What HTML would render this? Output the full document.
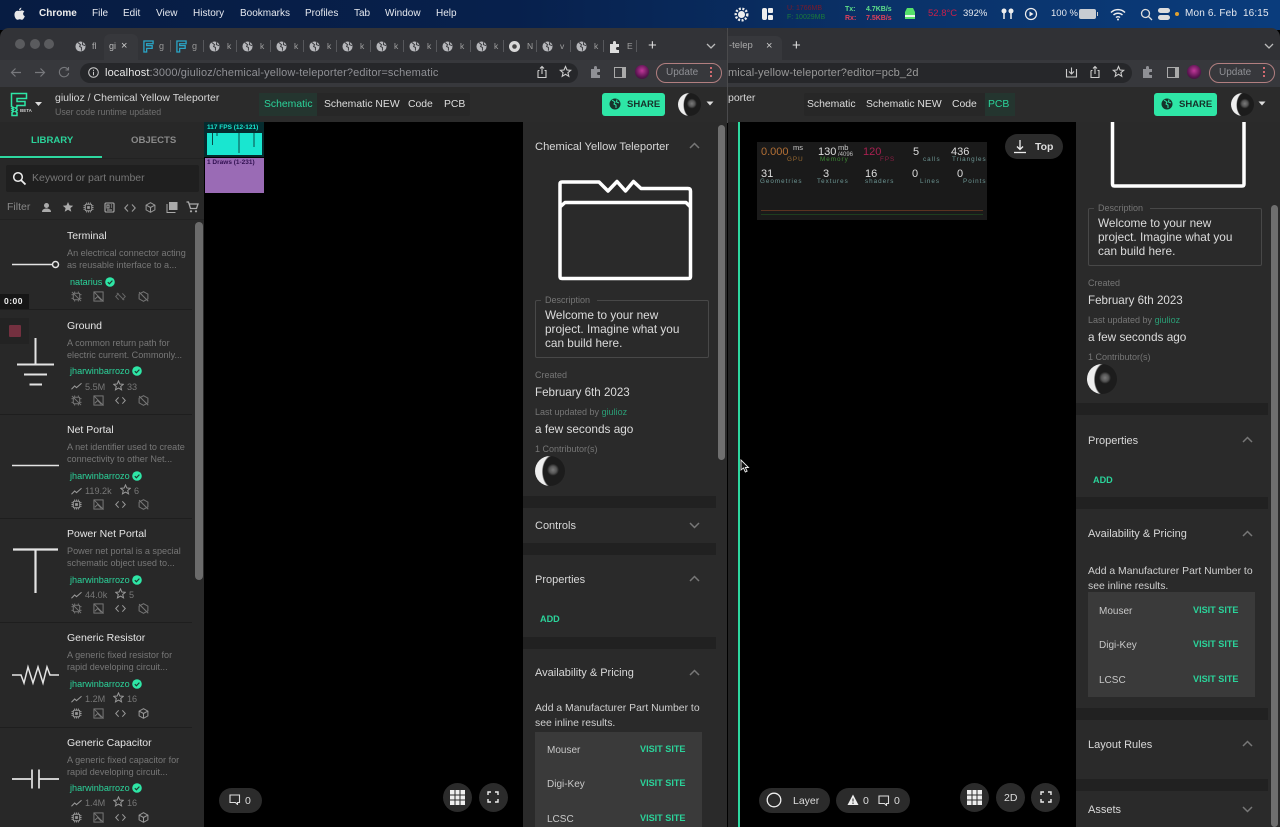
<!DOCTYPE html>
<html><head><meta charset="utf-8"><title>Chemical Yellow Teleporter</title>
<style>
html,body{margin:0;padding:0;background:#000}
#r{position:relative;width:1280px;height:827px;overflow:hidden;background:#000;font-family:"Liberation Sans",sans-serif;color:#ddd}
#r div,#r svg.a{position:absolute}
.t{position:absolute;white-space:nowrap;line-height:16px;height:16px}
.m{font-size:10px;color:#e6e9ef;top:6px}
.ti{font-size:10.5px;color:#e6e6e6;left:67px;margin-top:1px}
.de{font-size:9.1px;color:#777;left:67px}
.au{font-size:9.1px;color:#2bd39a;left:70px}
.st{font-size:9.1px;color:#777;margin-top:1px}
.hd{font-size:11px;color:#d8d8d8;margin-top:1px}
.sm{font-size:9px;color:#767676}
.bd{font-size:11.8px;color:#dcdcdc}
.vs{font-size:9.1px;font-weight:bold;color:#2bd39a;margin-top:1px}
.row{font-size:10px;color:#c8c8c8;margin-top:2px}
.band{background:#212121;height:12px}
.tb{font-size:10.4px;color:#dedede;top:97px}
.pill{background:#2b2b2b;border-radius:16px}
.share{background:#2ee6a6;border-radius:3px;width:63px;height:23px;top:93px}
.tg{font-size:8.5px;color:#a0a0a0;top:38px}
.sp{width:1px;height:12px;top:40px;background:#57585c}
.lb{font-size:6.3px;letter-spacing:1px;color:#6d9694}
.av{background:radial-gradient(circle 6px at 60% 46%,#7a7a7a 0,#555 60%,transparent 100%),radial-gradient(ellipse 13px 18px at 66% 52%,#1c1c1c 0,#1c1c1c 90%,transparent 100%),#eee}
.av2{background:radial-gradient(circle 5px at 60% 46%,#7a7a7a 0,#555 60%,transparent 100%),radial-gradient(ellipse 10px 14px at 66% 52%,#1c1c1c 0,#1c1c1c 90%,transparent 100%),#eee}
</style></head><body><div id="r">
<!-- menu bar -->
<div style="left:0;top:0;width:1280px;height:30px;background:linear-gradient(90deg,#071c42 0,#07204c 40%,#0a3269 70%,#0a3c7c 100%)"></div>
<svg class="a" style="left:14px;top:7px" width="11" height="14" viewBox="0 0 12 14"><path fill="#e8e8e8" d="M8 0c0 1.500-1 3-2.500 3C5.500 1.500 6.700.200 8 0zM6 3.600c.8 0 1.500-.6 2.700-.6 1 0 2 .5 2.600 1.400-2 1.200-1.700 4 .5 4.900-.6 1.700-1.800 4-3.100 4-.9 0-1.200-.6-2.400-.6s-1.600.6-2.400.6C2.300 13.300.5 10.500.5 7.800c0-2.800 1.700-4.400 3.400-4.400 1 0 1.600.5 2.100.2z"/></svg>
<span class="t m" style="left:39px;font-weight:bold;color:#eee">Chrome</span>
<span class="t m" style="left:92px">File</span><span class="t m" style="left:123px">Edit</span><span class="t m" style="left:156px">View</span><span class="t m" style="left:193px">History</span><span class="t m" style="left:240px">Bookmarks</span><span class="t m" style="left:305px">Profiles</span><span class="t m" style="left:354px">Tab</span><span class="t m" style="left:385px">Window</span><span class="t m" style="left:436px">Help</span>
<svg class="a" style="left:734px;top:7px" width="15" height="15" viewBox="0 0 15 15"><circle cx="7.500" cy="7.500" r="3.500" fill="#eee"/><circle cx="7.500" cy="7.500" r="5.800" fill="none" stroke="#eee" stroke-width="2.400" stroke-dasharray="2 1.500"/></svg>
<div style="left:762px;top:8px;width:5px;height:12px;background:#eee;border-radius:2px"></div><div style="left:768px;top:8px;width:5px;height:5px;background:#eee;border-radius:1px"></div><div style="left:768px;top:15px;width:5px;height:5px;background:#eee;border-radius:1px"></div>
<span class="t" style="left:787px;top:4px;font-size:7px;color:#7d1a2a;line-height:9px">U: 1766MB</span>
<span class="t" style="left:787px;top:13px;font-size:7px;color:#1a7a3a;line-height:9px">F: 10029MB</span>
<span class="t" style="left:845px;top:5px;font-size:7px;color:#5fe08a;line-height:9px;font-weight:bold">Tx:</span>
<span class="t" style="left:845px;top:14px;font-size:7px;color:#e0405a;line-height:9px;font-weight:bold">Rx:</span>
<span class="t" style="left:866px;top:5px;font-size:7px;color:#5fe08a;line-height:9px;font-weight:bold">4.7KB/s</span>
<span class="t" style="left:866px;top:14px;font-size:7px;color:#e0405a;line-height:9px;font-weight:bold">7.5KB/s</span>
<svg class="a" style="left:904px;top:7px" width="12" height="13" viewBox="0 0 12 13"><path d="M3 1h6l2 4v7H1V5z" fill="#55e06a"/><path d="M1 9h10" stroke="#e8f8ea" stroke-width="2"/></svg>
<span class="t" style="left:928px;top:6px;font-size:9.500px;color:#c8204a">52.8°C</span>
<span class="t" style="left:963px;top:6px;font-size:9.500px;color:#e6e9ef">392%</span>
<svg class="a" style="left:1000px;top:8px" width="16" height="13" viewBox="0 0 16 13"><path d="M4 1v10M11 1v10" stroke="#eee" stroke-width="1.500"/><circle cx="4" cy="3" r="2.500" fill="#eee"/><circle cx="11" cy="3" r="2.500" fill="#eee"/></svg>
<svg class="a" style="left:1024px;top:7px" width="14" height="14" viewBox="0 0 14 14"><circle cx="7" cy="7" r="5.500" fill="none" stroke="#eee" stroke-width="1.200"/><path d="M5.500 4.500v5l4-2.500z" fill="#eee"/></svg>
<span class="t" style="left:1051px;top:6px;font-size:9.500px;color:#e6e9ef">100 %</span>
<div style="left:1079px;top:9px;width:17px;height:10px;background:#c8ccd2;border-radius:2px"></div><div style="left:1097px;top:12px;width:1px;height:4px;background:#ccc"></div>
<svg class="a" style="left:1110px;top:8px" width="16" height="13" viewBox="0 0 16 13"><path d="M1 4.500a10 10 0 0 1 14 0M3.500 7a6.500 6.500 0 0 1 9 0M6 9.500a3 3 0 0 1 4 0" fill="none" stroke="#eee" stroke-width="1.500"/><circle cx="8" cy="11.500" r="1" fill="#eee"/></svg>
<svg class="a" style="left:1140px;top:8px" width="13" height="13" viewBox="0 0 13 13"><circle cx="5.500" cy="5.500" r="4" fill="none" stroke="#ddd" stroke-width="1.300"/><path d="M8.500 8.500l3.500 3.500" stroke="#ddd" stroke-width="1.300"/></svg>
<div style="left:1158px;top:8px;width:12px;height:5px;background:#ddd;border-radius:3px"></div><div style="left:1158px;top:15px;width:12px;height:5px;background:#ddd;border-radius:3px"></div>
<div style="left:1175px;top:12px;width:4px;height:4px;background:#e0a030;border-radius:2px"></div>
<span class="t" style="left:1185px;top:6px;font-size:10px;color:#e6e9ef;letter-spacing:.15px">Mon 6. Feb&nbsp; 16:15</span>

<!-- right window chrome -->
<div style="left:700px;top:28px;width:580px;height:32px;background:#303135;border-radius:0 9px 0 0"></div>
<div style="left:700px;top:60px;width:580px;height:27px;background:#37383c"></div>
<div style="left:700px;top:87px;width:580px;height:36px;background:#2b2b2b"></div>
<div style="left:728px;top:36px;width:54px;height:24px;background:#37383c;border-radius:0 6px 0 0"></div>
<span class="t" style="left:729px;top:38px;font-size:9.500px;color:#aaa">-telep</span>
<span class="t" style="left:766px;top:38px;font-size:11px;color:#ccc">×</span>
<span class="t" style="left:792px;top:38px;font-size:15px;color:#ddd">+</span>
<svg class="a" style="left:1264px;top:42px" width="10" height="8" viewBox="0 0 10 8"><path d="M1 2l4 4 4-4" fill="none" stroke="#bbb" stroke-width="1.300"/></svg>
<div style="left:728px;top:63px;width:404px;height:20px;background:#26272a;border-radius:0 10px 10px 0"></div>
<span class="t" style="left:728px;top:65px;font-size:11px;color:#999;letter-spacing:.12px">mical-yellow-teleporter?editor=pcb_2d</span>
<svg class="a" style="left:1065px;top:66px" width="13" height="13" viewBox="0 0 13 13"><path d="M1.500 3v8h10V3M6.500 1.500v6M4 5.500l2.500 2.500L9 5.500" fill="none" stroke="#ccc" stroke-width="1.100"/></svg>
<svg class="a" style="left:1089px;top:65px" width="12" height="14" viewBox="0 0 12 14"><path d="M2 5.500h1.500M8.500 5.500H10v7H2v-7M6 9V1.500M4 3.500l2-2 2 2" fill="none" stroke="#ccc" stroke-width="1.100"/></svg>
<svg class="a" style="left:1112px;top:65px" width="13" height="13" viewBox="0 0 13 13"><path d="M6.500 1.500l1.500 3.500 3.700.3-2.800 2.400.9 3.600-3.300-2-3.300 2 .9-3.600L1.300 5.300 5 5z" fill="none" stroke="#ccc" stroke-width="1.100"/></svg>
<svg class="a" style="left:1142px;top:66px" width="12" height="12" viewBox="0 0 12 12"><path d="M1 3h3V1.500a1.500 1.500 0 0 1 3 0V3h3v3h-1.500a1.500 1.500 0 0 0 0 3H10v3H1z" fill="#8f9095"/></svg>
<div style="left:1167px;top:67px;width:7px;height:9px;border:1.300px solid #aaa;border-right-width:4px"></div>
<div style="left:1187px;top:65px;width:14px;height:14px;border-radius:7px;background:radial-gradient(circle at 50% 40%,#c2389a 0,#5a1450 60%,#1b1b20 100%)"></div>
<div style="left:1209px;top:63px;width:64px;height:18px;border:1px solid #b27f80;border-radius:10px"></div>
<span class="t" style="left:1219px;top:65px;font-size:10px;color:#8f9095">Update</span>
<div style="left:1263px;top:67px;width:2px;height:2px;background:#d06a70"></div><div style="left:1263px;top:71px;width:2px;height:2px;background:#d06a70"></div><div style="left:1263px;top:75px;width:2px;height:2px;background:#d06a70"></div>
<span class="t" style="left:728px;top:90px;font-size:10.500px;color:#d8d8d8">porter</span>
<div style="left:804px;top:93px;width:211px;height:23px;background:#272727;border-radius:2px"></div>
<div style="left:985px;top:93px;width:30px;height:23px;background:#24352f"></div>
<span class="t tb" style="left:807px">Schematic</span><span class="t tb" style="left:866px">Schematic NEW</span><span class="t tb" style="left:952px">Code</span><span class="t tb" style="left:988px;color:#2bd39a">PCB</span>
<div class="share" style="left:1154px"></div>
<svg class="a" style="left:1161px;top:98px" width="12" height="12" viewBox="0 0 12 12"><circle cx="6" cy="6" r="5.500" fill="#17332b"/><path d="M3 2l3 2-1 2 2 1v3M8 1.500L7.500 4 10 5" stroke="#2ee6a6" fill="none"/></svg>
<span class="t" style="left:1179px;top:97px;font-size:9.500px;font-weight:bold;color:#17332b">SHARE</span>
<div class="av2" style="left:1231px;top:93px;width:23px;height:23px;border-radius:12px"></div>
<svg class="a" style="left:1258px;top:101px" width="8" height="5" viewBox="0 0 8 5"><path d="M.5.500h7L4 4.500z" fill="#ddd"/></svg>

<!-- right content -->
<div style="left:738px;top:122px;width:338px;height:705px;background:#000"></div>
<div style="left:1076px;top:122px;width:204px;height:705px;background:#2a2a2a"></div>
<!-- stats -->
<div style="left:757px;top:142px;width:230px;height:78px;background:#1a1a1a"></div>
<span class="t" style="left:761px;top:144px;font-size:11px;color:#b26f35">0.000</span>
<span class="t" style="left:793px;top:140px;font-size:7.500px;color:#ccc">ms</span>
<span class="t lb" style="left:787px;top:152px;color:#9a6a30">GPU</span>
<span class="t" style="left:818px;top:144px;font-size:11px;color:#ddd">130</span>
<span class="t" style="left:838px;top:140px;font-size:7.500px;color:#ccc">mb</span>
<span class="t" style="left:838px;top:147px;font-size:6px;color:#bbb">/4096</span>
<span class="t lb" style="left:820px;top:152px;color:#3d8a35">Memory</span>
<span class="t" style="left:863px;top:144px;font-size:11px;color:#a82050">120</span>
<span class="t lb" style="left:880px;top:152px;color:#8a2044">FPS</span>
<span class="t" style="left:913px;top:144px;font-size:11px;color:#ddd">5</span>
<span class="t lb" style="left:923px;top:152px">calls</span>
<span class="t" style="left:951px;top:144px;font-size:11px;color:#ddd">436</span>
<span class="t lb" style="left:952px;top:152px">Triangles</span>
<span class="t" style="left:761px;top:166px;font-size:11px;color:#ddd">31</span>
<span class="t lb" style="left:760px;top:174px">Geometries</span>
<span class="t" style="left:823px;top:166px;font-size:11px;color:#ddd">3</span>
<span class="t lb" style="left:817px;top:174px">Textures</span>
<span class="t" style="left:865px;top:166px;font-size:11px;color:#ddd">16</span>
<span class="t lb" style="left:865px;top:174px">shaders</span>
<span class="t" style="left:912px;top:166px;font-size:11px;color:#ddd">0</span>
<span class="t lb" style="left:920px;top:174px">Lines</span>
<span class="t" style="left:957px;top:166px;font-size:11px;color:#ddd">0</span>
<span class="t lb" style="left:963px;top:174px">Points</span>
<div style="left:761px;top:210px;width:222px;height:1px;background:#5a3320"></div>
<div style="left:761px;top:214px;width:222px;height:1px;background:#1e3d1e"></div>
<div class="pill" style="left:1005px;top:134px;width:58px;height:25px"></div>
<svg class="a" style="left:1013px;top:139px" width="14" height="15" viewBox="0 0 14 15"><path d="M7 1v9M4 7.500L7 10.500 10 7.500" fill="none" stroke="#eee" stroke-width="1.300"/><path d="M1 13.500h12" stroke="#eee" stroke-width="1.300"/></svg>
<span class="t" style="left:1035px;top:139px;font-size:10.500px;font-weight:bold;color:#ddd">Top</span>
<!-- right bottom toolbar -->
<div class="pill" style="left:759px;top:788px;width:71px;height:25px"></div>
<svg class="a" style="left:766px;top:792px" width="16" height="16"><circle cx="8" cy="8" r="6.800" fill="none" stroke="#eee" stroke-width="1.300"/></svg>
<span class="t" style="left:793px;top:793px;font-size:10.500px;color:#ddd">Layer</span>
<div class="pill" style="left:836px;top:788px;width:74px;height:25px"></div>
<svg class="a" style="left:847px;top:794px" width="12" height="12" viewBox="0 0 12 12"><path d="M6 .5L11.500 11H.5z" fill="#eee"/><path d="M6 4.500v3M6 8.500v1.500" stroke="#2b2b2b"/></svg>
<span class="t" style="left:863px;top:793px;font-size:10.500px;color:#ddd">0</span>
<svg class="a" style="left:878px;top:795px" width="12" height="11" viewBox="0 0 12 11"><path d="M1 1h9.500v7.500h-2v2l-2-2H1z" fill="none" stroke="#ddd" stroke-width="1.100"/></svg>
<span class="t" style="left:894px;top:793px;font-size:10.500px;color:#ddd">0</span>
<div class="pill" style="left:960px;top:783px;width:29px;height:29px"></div>
<svg class="a" style="left:966px;top:789px" width="17" height="17" viewBox="0 0 17 17"><rect x="1" y="1" width="15" height="15" fill="#eee"/><path d="M6 1v15M11 1v15M1 6h15M1 11h15" stroke="#2b2b2b" stroke-width="1"/></svg>
<div class="pill" style="left:996px;top:783px;width:29px;height:29px"></div>
<span class="t" style="left:1004px;top:790px;font-size:10.500px;color:#ddd">2D</span>
<div class="pill" style="left:1031px;top:783px;width:29px;height:29px"></div>
<svg class="a" style="left:1040px;top:791px" width="12" height="12" viewBox="0 0 12 12"><path d="M1 4V1h3M8 1h3v3M11 8v3H8M4 11H1V8" fill="none" stroke="#eee" stroke-width="1.400"/></svg>

<!-- right panel -->
<svg class="a" style="left:1076px;top:122px" width="204" height="70"><path d="M36.500 0V62Q36.500 64 38.500 64H166Q168 64 168 62V0" fill="none" stroke="#fff" stroke-width="3.500" stroke-linejoin="round"/></svg>
<div style="left:1088px;top:208px;width:172px;height:56px;border:1px solid #484848;border-radius:2px"></div>
<div style="left:1094px;top:205px;width:56px;height:6px;background:#2a2a2a"></div>
<span class="t sm" style="left:1098px;top:200px">Description</span>
<span class="t bd" style="left:1098px;top:215px">Welcome to your new</span><span class="t bd" style="left:1098px;top:229px">project. Imagine what you</span><span class="t bd" style="left:1098px;top:243px">can build here.</span>
<span class="t sm" style="left:1088px;top:275px">Created</span>
<span class="t bd" style="left:1088px;top:293px;font-size:11.600px">February 6th 2023</span>
<span class="t sm" style="left:1088px;top:312px">Last updated by <span style="color:#2a9e76">giulioz</span></span>
<span class="t bd" style="left:1088px;top:329px">a few seconds ago</span>
<span class="t sm" style="left:1088px;top:349px">1 Contributor(s)</span>
<div class="av" style="left:1087px;top:364px;width:30px;height:30px;border-radius:15px"></div>
<div class="band" style="left:1076px;top:403px;width:192px"></div>
<span class="t hd" style="left:1088px;top:432px">Properties</span>
<svg class="a" style="left:1242px;top:436px" width="11" height="7" viewBox="0 0 11 7"><path d="M1 6l4.500-4.500L10 6" fill="none" stroke="#777" stroke-width="1.500"/></svg>
<span class="t vs" style="left:1093px;top:471px">ADD</span>
<div class="band" style="left:1076px;top:497px;width:192px"></div>
<span class="t hd" style="left:1088px;top:525px">Availability &amp; Pricing</span>
<svg class="a" style="left:1242px;top:530px" width="11" height="7" viewBox="0 0 11 7"><path d="M1 6l4.500-4.500L10 6" fill="none" stroke="#777" stroke-width="1.500"/></svg>
<span class="t" style="left:1088px;top:564px;font-size:10.400px;color:#d0d0d0">Add a Manufacturer Part Number to</span>
<span class="t" style="left:1088px;top:579px;font-size:10.400px;color:#d0d0d0">see inline results.</span>
<div style="left:1088px;top:592px;width:167px;height:105px;background:#3a3a3a"></div>
<span class="t row" style="left:1099px;top:602px">Mouser</span><span class="t vs" style="left:1193px;top:601px">VISIT SITE</span>
<span class="t row" style="left:1099px;top:636px">Digi-Key</span><span class="t vs" style="left:1193px;top:635px">VISIT SITE</span>
<span class="t row" style="left:1099px;top:671px">LCSC</span><span class="t vs" style="left:1193px;top:670px">VISIT SITE</span>
<div class="band" style="left:1076px;top:708px;width:192px"></div>
<span class="t hd" style="left:1088px;top:736px">Layout Rules</span>
<svg class="a" style="left:1242px;top:740px" width="11" height="7" viewBox="0 0 11 7"><path d="M1 6l4.500-4.500L10 6" fill="none" stroke="#777" stroke-width="1.500"/></svg>
<div class="band" style="left:1076px;top:779px;width:192px"></div>
<span class="t hd" style="left:1088px;top:801px">Assets</span>
<svg class="a" style="left:1242px;top:806px" width="11" height="7" viewBox="0 0 11 7"><path d="M1 1l4.500 4.500L10 1" fill="none" stroke="#777" stroke-width="1.500"/></svg>
<div style="left:1271px;top:205px;width:7px;height:622px;background:#6f6f6f;border-radius:4px"></div>

<!-- left window -->
<div style="left:0;top:28px;width:728px;height:32px;background:#323337;border-radius:9px 9px 0 0"></div>
<div style="left:0;top:60px;width:728px;height:27px;background:#37383c"></div>
<div style="left:0;top:87px;width:728px;height:36px;background:#2b2b2b"></div>
<div style="left:727px;top:28px;width:1px;height:95px;background:#4a4a4c"></div>
<div style="left:728px;top:122px;width:10px;height:705px;background:#232323"></div>
<div style="left:738px;top:122px;width:1.500px;height:705px;background:#2ed8a0"></div>
<div style="left:15px;top:39px;width:10px;height:10px;background:#5a5b5e;border-radius:5px"></div>
<div style="left:30px;top:39px;width:10px;height:10px;background:#5a5b5e;border-radius:5px"></div>
<div style="left:44px;top:39px;width:10px;height:10px;background:#5a5b5e;border-radius:5px"></div>
<div style="left:104px;top:34px;width:34px;height:26px;background:#37383c;border-radius:6px 6px 0 0"></div>
<svg width="0" height="0" style="position:absolute"><defs>
<symbol id="gl" viewBox="0 0 12 12"><circle cx="6" cy="6" r="5.500" fill="#b5b6ba"/><path d="M3 1.500L6 4 5 6l2 1v3.500M8.500 1L8 4l3 1" stroke="#323337" fill="none"/></symbol>
<symbol id="fl" viewBox="0 0 12 14"><path d="M1 1h10v3H4v2h6v3H4v4H1z" fill="none" stroke="#2aa6c8" stroke-width="1.400"/></symbol>
<symbol id="ch" viewBox="0 0 11 7"><path d="M1 6l4.500-4.500L10 6" fill="none" stroke="#777" stroke-width="1.500"/></symbol>
<symbol id="chip" viewBox="0 0 12 12"><rect x="2.500" y="2.500" width="7" height="7" rx="1" fill="none" stroke="#999" stroke-width="1.100"/><rect x="4.500" y="4.500" width="3" height="3" fill="#999"/><path d="M4 .5v2M6 .5v2M8 .5v2M4 9.500v2M6 9.500v2M8 9.500v2M.5 4h2M.5 6h2M.5 8h2M9.500 4h2M9.500 6h2M9.500 8h2" stroke="#999"/></symbol>
<symbol id="chipx" viewBox="0 0 12 12"><rect x="2.500" y="2.500" width="7" height="7" rx="1" fill="none" stroke="#777" stroke-width="1.100"/><path d="M4 .5v2M8 .5v2M4 9.500v2M8 9.500v2M.5 4h2M.5 8h2M9.500 4h2M9.500 8h2M1 1l10 10" stroke="#777"/></symbol>
<symbol id="imgx" viewBox="0 0 12 12"><rect x="1" y="1" width="10" height="10" fill="none" stroke="#777" stroke-width="1.100"/><path d="M1 1l10.500 10.500M2 9l3-3 4 4" stroke="#777" fill="none"/></symbol>
<symbol id="code" viewBox="0 0 12 12"><path d="M4 2.500L.8 6 4 9.500M8 2.500L11.200 6 8 9.500" fill="none" stroke="#999" stroke-width="1.100"/></symbol>
<symbol id="codex" viewBox="0 0 12 12"><path d="M4 2.500L.8 6 4 9.500M8 2.500L11.200 6 8 9.500M2 2l8 8" fill="none" stroke="#666" stroke-width="1.100"/></symbol>
<symbol id="box" viewBox="0 0 12 12"><path d="M6 .8l4.800 2.600v5.200L6 11.200 1.200 8.600V3.400zM1.200 3.400L6 6l4.800-2.600M6 6v5.200" fill="none" stroke="#999" stroke-width="1.100"/></symbol>
<symbol id="boxx" viewBox="0 0 12 12"><path d="M6 .8l4.800 2.600v5.200L6 11.200 1.200 8.600V3.400zM1.200 1.200l10 10" fill="none" stroke="#777" stroke-width="1.100"/></symbol>
<symbol id="ok" viewBox="0 0 10 10"><circle cx="5" cy="5" r="4.800" fill="#2ee6a6"/><path d="M2.800 5.200L4.400 6.800 7.400 3.600" fill="none" stroke="#1e3a30" stroke-width="1.200"/></symbol>
<symbol id="tr" viewBox="0 0 12 8"><path d="M.5 7.500L4 4l2 1.800L11.500 1" fill="none" stroke="#999" stroke-width="1.100"/></symbol>
<symbol id="star" viewBox="0 0 12 12"><path d="M6 1l1.500 3.400 3.700.3-2.800 2.400.9 3.600L6 8.800l-3.300 1.900.9-3.600L.8 4.700l3.700-.3z" fill="none" stroke="#999" stroke-width="1.100"/></symbol>
</defs></svg>
<svg class="a" style="left:75px;top:41px" width="11" height="11"><use href="#gl"/></svg><span class="t" style="left:92px;top:38px;font-size:9px;color:#aaa">fl</span>
<span class="t" style="left:109px;top:38px;font-size:9px;color:#bbb">gi</span><span class="t" style="left:121px;top:38px;font-size:11px;color:#ccc">×</span>
<svg class="a" style="left:143px;top:40px" width="11" height="13"><use href="#fl"/></svg><span class="t" style="left:159px;top:38px;font-size:9px;color:#999">g</span>
<div class="sp" style="left:170px"></div>
<svg class="a" style="left:176px;top:40px" width="11" height="13"><use href="#fl"/></svg><span class="t" style="left:192px;top:38px;font-size:9px;color:#999">g</span>
<div class="sp" style="left:203px"></div>
<svg class="a" style="left:209px;top:41px" width="11" height="11"><use href="#gl"/></svg><span class="t tg" style="left:227px">k</span>
<div class="sp" style="left:236px"></div>
<svg class="a" style="left:242px;top:41px" width="11" height="11"><use href="#gl"/></svg><span class="t tg" style="left:260px">k</span>
<div class="sp" style="left:270px"></div>
<svg class="a" style="left:276px;top:41px" width="11" height="11"><use href="#gl"/></svg><span class="t tg" style="left:294px">k</span>
<div class="sp" style="left:303px"></div>
<svg class="a" style="left:309px;top:41px" width="11" height="11"><use href="#gl"/></svg><span class="t tg" style="left:327px">k</span>
<div class="sp" style="left:336px"></div>
<svg class="a" style="left:342px;top:41px" width="11" height="11"><use href="#gl"/></svg><span class="t tg" style="left:360px">k</span>
<div class="sp" style="left:370px"></div>
<svg class="a" style="left:376px;top:41px" width="11" height="11"><use href="#gl"/></svg><span class="t tg" style="left:394px">k</span>
<div class="sp" style="left:403px"></div>
<svg class="a" style="left:409px;top:41px" width="11" height="11"><use href="#gl"/></svg><span class="t tg" style="left:427px">k</span>
<div class="sp" style="left:436px"></div>
<svg class="a" style="left:442px;top:41px" width="11" height="11"><use href="#gl"/></svg><span class="t tg" style="left:460px">k</span>
<div class="sp" style="left:470px"></div>
<svg class="a" style="left:476px;top:41px" width="11" height="11"><use href="#gl"/></svg><span class="t tg" style="left:494px">k</span>
<div class="sp" style="left:503px"></div>
<svg class="a" style="left:509px;top:41px" width="11" height="11"><circle cx="5.500" cy="5.500" r="5.500" fill="#d8d8d8"/><circle cx="5.500" cy="5.500" r="2.300" fill="#444"/></svg><span class="t tg" style="left:527px">N</span>
<div class="sp" style="left:536px"></div>
<svg class="a" style="left:542px;top:41px" width="11" height="11"><use href="#gl"/></svg><span class="t tg" style="left:560px">v</span>
<div class="sp" style="left:570px"></div>
<svg class="a" style="left:576px;top:41px" width="11" height="11"><use href="#gl"/></svg><span class="t tg" style="left:594px">k</span>
<div class="sp" style="left:603px"></div>
<svg class="a" style="left:609px;top:41px" width="12" height="12" viewBox="0 0 12 12"><path d="M1 3h3V1.500a1.500 1.500 0 0 1 3 0V3h3v3h-1.500a1.500 1.500 0 0 0 0 3H10v3H1z" fill="#ddd"/></svg><span class="t tg" style="left:627px">E</span>
<div class="sp" style="left:636px"></div>
<span class="t" style="left:648px;top:38px;font-size:15px;color:#ddd">+</span>
<svg class="a" style="left:706px;top:42px" width="10" height="8" viewBox="0 0 10 8"><path d="M1 2l4 4 4-4" fill="none" stroke="#bbb" stroke-width="1.300"/></svg>
<!-- addr -->
<svg class="a" style="left:10px;top:67px" width="12" height="11" viewBox="0 0 12 11"><path d="M11 5.500H1.500M5.500 1.500l-4 4 4 4" fill="none" stroke="#77787c" stroke-width="1.200"/></svg>
<svg class="a" style="left:34px;top:67px" width="12" height="11" viewBox="0 0 12 11"><path d="M1 5.500h9.500M6.500 1.500l4 4-4 4" fill="none" stroke="#77787c" stroke-width="1.200"/></svg>
<svg class="a" style="left:58px;top:66px" width="12" height="12" viewBox="0 0 12 12"><path d="M10 3.500A4.700 4.700 0 1 0 10.700 7M10.500 1v3h-3" fill="none" stroke="#77787c" stroke-width="1.100"/></svg>
<div style="left:80px;top:63px;width:498px;height:20px;background:#26272a;border-radius:10px"></div>
<svg class="a" style="left:88px;top:67px" width="11" height="11" viewBox="0 0 11 11"><circle cx="5.500" cy="5.500" r="4.800" fill="none" stroke="#ccc"/><path d="M5.500 4.800v3.400M5.500 2.700v1.200" stroke="#ccc"/></svg>
<span class="t" style="left:105px;top:65px;font-size:11px;color:#8f9095;letter-spacing:.12px"><span style="color:#e8e8e8">localhost</span>:3000/giulioz/chemical-yellow-teleporter?editor=schematic</span>
<svg class="a" style="left:536px;top:65px" width="12" height="14" viewBox="0 0 12 14"><path d="M2 5.500h1.500M8.500 5.500H10v7H2v-7M6 9V1.500M4 3.500l2-2 2 2" fill="none" stroke="#ccc" stroke-width="1.100"/></svg>
<svg class="a" style="left:559px;top:65px" width="13" height="13" viewBox="0 0 13 13"><path d="M6.500 1.500l1.500 3.500 3.700.3-2.800 2.400.9 3.600-3.300-2-3.300 2 .9-3.600L1.300 5.300 5 5z" fill="none" stroke="#ccc" stroke-width="1.100"/></svg>
<svg class="a" style="left:590px;top:66px" width="12" height="12" viewBox="0 0 12 12"><path d="M1 3h3V1.500a1.500 1.500 0 0 1 3 0V3h3v3h-1.500a1.500 1.500 0 0 0 0 3H10v3H1z" fill="#8f9095"/></svg>
<div style="left:614px;top:67px;width:7px;height:9px;border:1.300px solid #aaa;border-right-width:4px"></div>
<div style="left:635px;top:65px;width:14px;height:14px;border-radius:7px;background:radial-gradient(circle at 50% 40%,#c2389a 0,#5a1450 60%,#1b1b20 100%)"></div>
<div style="left:656px;top:63px;width:64px;height:18px;border:1px solid #b27f80;border-radius:10px"></div>
<span class="t" style="left:666px;top:65px;font-size:10px;color:#8f9095">Update</span>
<div style="left:710px;top:67px;width:2px;height:2px;background:#d06a70"></div><div style="left:710px;top:71px;width:2px;height:2px;background:#d06a70"></div><div style="left:710px;top:75px;width:2px;height:2px;background:#d06a70"></div>
<!-- app header left -->
<svg class="a" style="left:10px;top:92px" width="18" height="25" viewBox="0 0 18 25"><path d="M1.500 1.500H16.500V6.500H7V9.500H15V13.500H7V15L5.500 16 7 17V18.500L5.500 19.500 7 20.500V23.500H2V20.500L3.500 19.500 2 18.500 3.500 17.500 2 16.500 3.500 15.500 1.500 14.500Z" fill="none" stroke="#2ee6a6" stroke-width="1.500"/></svg>
<span class="t" style="left:20px;top:107px;font-size:4.500px;font-weight:bold;color:#ccc;line-height:8px;height:8px">BETA</span>
<svg class="a" style="left:35px;top:102px" width="7" height="4" viewBox="0 0 7 4"><path d="M0 0h7L3.500 4z" fill="#ddd"/></svg>
<span class="t" style="left:55px;top:90px;font-size:10.500px;color:#d8d8d8">giulioz / Chemical Yellow Teleporter</span>
<span class="t" style="left:55px;top:104px;font-size:8.800px;color:#707070">User code runtime updated</span>
<div style="left:259px;top:93px;width:211px;height:23px;background:#272727;border-radius:2px"></div>
<div style="left:259px;top:93px;width:58px;height:23px;background:#24352f"></div>
<span class="t tb" style="left:264px;color:#2bd39a">Schematic</span><span class="t tb" style="left:324px">Schematic NEW</span><span class="t tb" style="left:408px">Code</span><span class="t tb" style="left:444px">PCB</span>
<div class="share" style="left:602px"></div>
<svg class="a" style="left:609px;top:98px" width="12" height="12" viewBox="0 0 12 12"><circle cx="6" cy="6" r="5.500" fill="#17332b"/><path d="M3 2l3 2-1 2 2 1v3M8 1.500L7.500 4 10 5" stroke="#2ee6a6" fill="none"/></svg>
<span class="t" style="left:627px;top:97px;font-size:9.500px;font-weight:bold;color:#17332b">SHARE</span>
<div class="av2" style="left:678px;top:93px;width:23px;height:23px;border-radius:12px"></div>
<svg class="a" style="left:706px;top:101px" width="8" height="5" viewBox="0 0 8 5"><path d="M.5.500h7L4 4.500z" fill="#ddd"/></svg>

<!-- left canvas -->
<div style="left:204px;top:122px;width:319px;height:705px;background:#000"></div>
<div style="left:204px;top:122px;width:60px;height:35px;background:#052b2e"></div>
<div style="left:207px;top:133px;width:55px;height:22px;background:#19e6d0"></div>
<svg class="a" style="left:207px;top:133px" width="55" height="22"><path d="M5.500 0V12M10 0V3M32 0V20M47 0V14" stroke="#0a4a48" stroke-width="1"/></svg>
<span class="t" style="left:207px;top:123px;font-size:6.500px;font-weight:bold;color:#19e6d0;line-height:9px;height:9px">117 FPS (12-121)</span>
<div style="left:205px;top:158px;width:59px;height:35px;background:#9a6bb5"></div>
<span class="t" style="left:207px;top:158px;font-size:6.500px;font-weight:bold;color:#301050;line-height:9px;height:9px">1 Draws (1-231)</span>
<div class="pill" style="left:219px;top:788px;width:43px;height:25px"></div>
<svg class="a" style="left:229px;top:794px" width="12" height="11" viewBox="0 0 12 11"><path d="M1 1h9.500v7.500h-2v2l-2-2H1z" fill="none" stroke="#ddd" stroke-width="1.100"/></svg>
<span class="t" style="left:245px;top:793px;font-size:10.500px;color:#ddd">0</span>
<div class="pill" style="left:443px;top:783px;width:29px;height:29px"></div>
<svg class="a" style="left:449px;top:789px" width="17" height="17" viewBox="0 0 17 17"><rect x="1" y="1" width="15" height="15" fill="#eee"/><path d="M6 1v15M11 1v15M1 6h15M1 11h15" stroke="#2b2b2b" stroke-width="1"/></svg>
<div class="pill" style="left:479px;top:783px;width:29px;height:29px"></div>
<svg class="a" style="left:487px;top:791px" width="12" height="12" viewBox="0 0 12 12"><path d="M1 4V1h3M8 1h3v3M11 8v3H8M4 11H1V8" fill="none" stroke="#eee" stroke-width="1.400"/></svg>

<!-- left sidebar -->
<div style="left:0;top:122px;width:204px;height:705px;background:#282828"></div>
<span class="t" style="left:31px;top:133px;font-size:9.600px;font-weight:bold;color:#2bd39a">LIBRARY</span>
<span class="t" style="left:131px;top:133px;font-size:9.600px;font-weight:bold;color:#8a8a8a">OBJECTS</span>
<div style="left:0;top:156px;width:102px;height:2px;background:#2ed8a0"></div>
<div style="left:0;top:158px;width:204px;height:1px;background:#222"></div>
<div style="left:6px;top:165px;width:193px;height:27px;background:#1f1f1f;border-radius:2px"></div>
<svg class="a" style="left:12px;top:171px" width="15" height="15" viewBox="0 0 15 15"><circle cx="6" cy="6" r="4.300" fill="none" stroke="#eee" stroke-width="1.500"/><path d="M9.200 9.200L13.500 13.500" stroke="#eee" stroke-width="1.800"/></svg>
<span class="t" style="left:32px;top:170px;font-size:10.500px;color:#777">Keyword or part number</span>
<span class="t" style="left:7px;top:199px;font-size:10.500px;color:#888">Filter</span>
<svg class="a" style="left:41px;top:202px" width="11" height="11" viewBox="0 0 11 11"><circle cx="5.500" cy="3.500" r="2.500" fill="#aaa"/><path d="M1 10c0-2.500 2-3.500 4.500-3.500S10 7.500 10 10z" fill="#aaa"/></svg>
<svg class="a" style="left:62px;top:201px" width="12" height="12" viewBox="0 0 12 12"><path d="M6 1l1.500 3.400 3.700.3-2.800 2.400.9 3.600L6 8.800l-3.300 1.900.9-3.600L.8 4.700l3.700-.3z" fill="#aaa"/></svg>
<svg class="a" style="left:83px;top:202px" width="11" height="11"><use href="#chip"/></svg>
<svg class="a" style="left:104px;top:202px" width="11" height="11" viewBox="0 0 11 11"><rect x="1" y="1" width="9" height="9" rx="1" fill="none" stroke="#aaa" stroke-width="1.100"/><path d="M3 3h2v3H3zM7 3h1M7 5h1M3 8h5" stroke="#aaa"/></svg>
<svg class="a" style="left:124px;top:202px" width="12" height="12"><use href="#code"/></svg>
<svg class="a" style="left:145px;top:202px" width="11" height="11"><use href="#box"/></svg>
<svg class="a" style="left:166px;top:201px" width="12" height="12" viewBox="0 0 12 12"><rect x="3" y="1" width="8.500" height="8" fill="#aaa"/><path d="M1 3v8.500h8.500" fill="none" stroke="#aaa"/></svg>
<svg class="a" style="left:186px;top:201px" width="13" height="12" viewBox="0 0 13 12"><path d="M.5 1h2l2 6.500h6L12 3H3.500" fill="none" stroke="#aaa" stroke-width="1.300"/><circle cx="5" cy="10.300" r="1.100" fill="#aaa"/><circle cx="10" cy="10.300" r="1.100" fill="#aaa"/></svg>
<div style="left:0;top:219px;width:204px;height:1px;background:#222"></div>
<div style="left:195px;top:222px;width:8px;height:358px;background:#6b6b6b;border-radius:4px"></div>
<!-- separators -->
<div style="left:0;top:309px;width:192px;height:1px;background:#1e1e1e"></div>
<div style="left:0;top:414px;width:192px;height:1px;background:#1e1e1e"></div>
<div style="left:0;top:518px;width:192px;height:1px;background:#1e1e1e"></div>
<div style="left:0;top:622px;width:192px;height:1px;background:#1e1e1e"></div>
<div style="left:0;top:727px;width:192px;height:1px;background:#1e1e1e"></div>
<!-- symbols -->
<svg class="a" style="left:0;top:222px" width="70" height="605" viewBox="0 222 70 605"><g fill="none" stroke="#e4e4e4" stroke-width="1.500">
<path d="M12 264.500H52"/><circle cx="55.500" cy="264.500" r="3"/>
<path d="M35.500 338V364M17 364.500H54M24 374.500H47M29.500 384.500H42" stroke-width="2"/>
<path d="M12 465.500H59"/>
<path d="M13 549.500H58M35.500 549.500V593" stroke-width="2.200"/>
<path d="M12 675H21L24 683L28 667L33 683L38 667L43 683L47 667L50 675H59"/>
<path d="M12 779H31M32 769.500V788.500M39 769.500V788.500M39 779H59" stroke-width="1.700"/>
</g></svg>
<!-- items -->
<span class="t ti" style="top:227px">Terminal</span>
<span class="t de" style="top:245px">An electrical connector acting</span><span class="t de" style="top:257px">as reusable interface to a...</span>
<span class="t au" style="top:274px">natarius</span><svg class="a" style="left:105px;top:277px" width="10" height="10"><use href="#ok"/></svg>
<svg class="a" style="left:71px;top:291px" width="11" height="11"><use href="#chipx"/></svg><svg class="a" style="left:93px;top:291px" width="11" height="11"><use href="#imgx"/></svg><svg class="a" style="left:115px;top:291px" width="11" height="11"><use href="#codex"/></svg><svg class="a" style="left:138px;top:291px" width="11" height="11"><use href="#boxx"/></svg>

<span class="t ti" style="top:317px">Ground</span>
<span class="t de" style="top:335px">A common return path for</span><span class="t de" style="top:347px">electric current. Commonly...</span>
<span class="t au" style="top:363px">jharwinbarrozo</span><svg class="a" style="left:132px;top:366px" width="10" height="10"><use href="#ok"/></svg>
<svg class="a" style="left:71px;top:382px" width="11" height="8"><use href="#tr"/></svg><span class="t st" style="left:85px;top:378px">5.5M</span><svg class="a" style="left:113px;top:380px" width="11" height="11"><use href="#star"/></svg><span class="t st" style="left:127px;top:378px">33</span>
<svg class="a" style="left:71px;top:395px" width="11" height="11"><use href="#chipx"/></svg><svg class="a" style="left:93px;top:395px" width="11" height="11"><use href="#imgx"/></svg><svg class="a" style="left:115px;top:395px" width="11" height="11"><use href="#code"/></svg><svg class="a" style="left:138px;top:395px" width="11" height="11"><use href="#boxx"/></svg>

<span class="t ti" style="top:421px">Net Portal</span>
<span class="t de" style="top:439px">A net identifier used to create</span><span class="t de" style="top:451px">connectivity to other Net...</span>
<span class="t au" style="top:468px">jharwinbarrozo</span><svg class="a" style="left:132px;top:471px" width="10" height="10"><use href="#ok"/></svg>
<svg class="a" style="left:71px;top:487px" width="11" height="8"><use href="#tr"/></svg><span class="t st" style="left:85px;top:482px">119.2k</span><svg class="a" style="left:120px;top:484px" width="11" height="11"><use href="#star"/></svg><span class="t st" style="left:134px;top:482px">6</span>
<svg class="a" style="left:71px;top:499px" width="11" height="11"><use href="#chip"/></svg><svg class="a" style="left:93px;top:499px" width="11" height="11"><use href="#imgx"/></svg><svg class="a" style="left:115px;top:499px" width="11" height="11"><use href="#code"/></svg><svg class="a" style="left:138px;top:499px" width="11" height="11"><use href="#boxx"/></svg>

<span class="t ti" style="top:525px">Power Net Portal</span>
<span class="t de" style="top:543px">Power net portal is a special</span><span class="t de" style="top:555px">schematic object used to...</span>
<span class="t au" style="top:572px">jharwinbarrozo</span><svg class="a" style="left:132px;top:575px" width="10" height="10"><use href="#ok"/></svg>
<svg class="a" style="left:71px;top:591px" width="11" height="8"><use href="#tr"/></svg><span class="t st" style="left:85px;top:586px">44.0k</span><svg class="a" style="left:115px;top:588px" width="11" height="11"><use href="#star"/></svg><span class="t st" style="left:129px;top:586px">5</span>
<svg class="a" style="left:71px;top:603px" width="11" height="11"><use href="#chipx"/></svg><svg class="a" style="left:93px;top:603px" width="11" height="11"><use href="#imgx"/></svg><svg class="a" style="left:115px;top:603px" width="11" height="11"><use href="#code"/></svg><svg class="a" style="left:138px;top:603px" width="11" height="11"><use href="#boxx"/></svg>

<span class="t ti" style="top:629px">Generic Resistor</span>
<span class="t de" style="top:647px">A generic fixed resistor for</span><span class="t de" style="top:659px">rapid developing circuit...</span>
<span class="t au" style="top:676px">jharwinbarrozo</span><svg class="a" style="left:132px;top:679px" width="10" height="10"><use href="#ok"/></svg>
<svg class="a" style="left:71px;top:695px" width="11" height="8"><use href="#tr"/></svg><span class="t st" style="left:85px;top:690px">1.2M</span><svg class="a" style="left:113px;top:692px" width="11" height="11"><use href="#star"/></svg><span class="t st" style="left:127px;top:690px">16</span>
<svg class="a" style="left:71px;top:708px" width="11" height="11"><use href="#chip"/></svg><svg class="a" style="left:93px;top:708px" width="11" height="11"><use href="#imgx"/></svg><svg class="a" style="left:115px;top:708px" width="11" height="11"><use href="#code"/></svg><svg class="a" style="left:138px;top:708px" width="11" height="11"><use href="#box"/></svg>

<span class="t ti" style="top:734px">Generic Capacitor</span>
<span class="t de" style="top:752px">A generic fixed capacitor for</span><span class="t de" style="top:764px">rapid developing circuit...</span>
<span class="t au" style="top:780px">jharwinbarrozo</span><svg class="a" style="left:132px;top:783px" width="10" height="10"><use href="#ok"/></svg>
<svg class="a" style="left:71px;top:799px" width="11" height="8"><use href="#tr"/></svg><span class="t st" style="left:85px;top:794px">1.4M</span><svg class="a" style="left:113px;top:796px" width="11" height="11"><use href="#star"/></svg><span class="t st" style="left:127px;top:794px">16</span>
<svg class="a" style="left:71px;top:812px" width="11" height="11"><use href="#chip"/></svg><svg class="a" style="left:93px;top:812px" width="11" height="11"><use href="#imgx"/></svg><svg class="a" style="left:115px;top:812px" width="11" height="11"><use href="#code"/></svg><svg class="a" style="left:138px;top:812px" width="11" height="11"><use href="#box"/></svg>

<!-- recorder overlay -->
<div style="left:0;top:294px;width:29px;height:15px;background:#161616"></div>
<span class="t" style="left:4px;top:293px;font-size:8.500px;font-weight:bold;letter-spacing:.5px;color:#eee">0:00</span>
<div style="left:0;top:318px;width:29px;height:26px;background:#232323"></div>
<div style="left:9px;top:325px;width:12px;height:12px;background:#73303f;border-radius:1px"></div>

<!-- left panel -->
<div style="left:523px;top:122px;width:204px;height:705px;background:#2a2a2a"></div>
<span class="t hd" style="left:535px;top:138px;font-size:11.200px">Chemical Yellow Teleporter</span>
<svg class="a" style="left:689px;top:142px" width="11" height="7"><use href="#ch"/></svg>
<svg class="a" style="left:523px;top:170px" width="204" height="120" viewBox="523 170 204 120"><path d="M560 276.500V184Q560 182 562 182H599L608 191 617 181.500 625.500 191 633.500 181.500 641 188.500H688Q690.500 188.500 690.500 191V276.500Q690.500 278.500 688.500 278.500H562Q560 278.500 560 276.500ZM560 207L565 202.500H686L690.500 207" fill="none" stroke="#fff" stroke-width="3.500" stroke-linejoin="round"/></svg>
<div style="left:535px;top:300px;width:172px;height:56px;border:1px solid #484848;border-radius:2px"></div>
<div style="left:541px;top:297px;width:56px;height:6px;background:#2a2a2a"></div>
<span class="t sm" style="left:545px;top:292px">Description</span>
<span class="t bd" style="left:545px;top:307px">Welcome to your new</span><span class="t bd" style="left:545px;top:321px">project. Imagine what you</span><span class="t bd" style="left:545px;top:335px">can build here.</span>
<span class="t sm" style="left:535px;top:367px">Created</span>
<span class="t bd" style="left:535px;top:385px;font-size:11.600px">February 6th 2023</span>
<span class="t sm" style="left:535px;top:404px">Last updated by <span style="color:#2a9e76">giulioz</span></span>
<span class="t bd" style="left:535px;top:421px">a few seconds ago</span>
<span class="t sm" style="left:535px;top:441px">1 Contributor(s)</span>
<div class="av" style="left:535px;top:456px;width:30px;height:30px;border-radius:15px"></div>
<div class="band" style="left:523px;top:496px;width:193px"></div>
<span class="t hd" style="left:535px;top:517px">Controls</span>
<svg class="a" style="left:689px;top:522px" width="11" height="7" viewBox="0 0 11 7"><path d="M1 1l4.500 4.500L10 1" fill="none" stroke="#777" stroke-width="1.500"/></svg>
<div class="band" style="left:523px;top:543px;width:193px"></div>
<span class="t hd" style="left:535px;top:571px">Properties</span>
<svg class="a" style="left:689px;top:575px" width="11" height="7"><use href="#ch"/></svg>
<span class="t vs" style="left:540px;top:610px">ADD</span>
<div class="band" style="left:523px;top:637px;width:193px"></div>
<span class="t hd" style="left:535px;top:664px">Availability &amp; Pricing</span>
<svg class="a" style="left:689px;top:669px" width="11" height="7"><use href="#ch"/></svg>
<span class="t" style="left:535px;top:701px;font-size:10.400px;color:#d0d0d0">Add a Manufacturer Part Number to</span>
<span class="t" style="left:535px;top:716px;font-size:10.400px;color:#d0d0d0">see inline results.</span>
<div style="left:535px;top:732px;width:167px;height:95px;background:#3a3a3a"></div>
<span class="t row" style="left:547px;top:741px">Mouser</span><span class="t vs" style="left:640px;top:740px">VISIT SITE</span>
<span class="t row" style="left:547px;top:775px">Digi-Key</span><span class="t vs" style="left:640px;top:774px">VISIT SITE</span>
<span class="t row" style="left:547px;top:810px">LCSC</span><span class="t vs" style="left:640px;top:809px">VISIT SITE</span>
<div style="left:718px;top:125px;width:7px;height:335px;background:#6f6f6f;border-radius:4px"></div>
<!-- cursor -->
<svg class="a" style="left:740px;top:459px" width="10" height="14" viewBox="0 0 10 14"><path d="M1 1v10l2.500-2 1.800 4 1.800-.8L5.300 8.500H8.500z" fill="#111" stroke="#eee" stroke-width=".9"/></svg>
</div></body></html>
